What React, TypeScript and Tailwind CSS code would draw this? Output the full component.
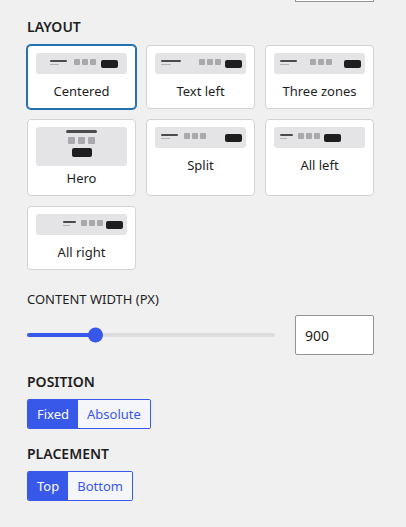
import React from 'react';

type Variant = 'centered' | 'textLeft' | 'threeZones' | 'hero' | 'split' | 'allLeft' | 'allRight';

const layouts: { id: Variant; label: string }[] = [
  { id: 'centered', label: 'Centered' },
  { id: 'textLeft', label: 'Text left' },
  { id: 'threeZones', label: 'Three zones' },
  { id: 'hero', label: 'Hero' },
  { id: 'split', label: 'Split' },
  { id: 'allLeft', label: 'All left' },
  { id: 'allRight', label: 'All right' },
];

const Logo = ({ wide, light }: { wide: string; light: string }) => (
  <div className="mt-[1px] flex flex-col gap-[2px]">
    <div className={`h-[2px] rounded-full bg-[#4a4a4d] ${wide}`} />
    <div className={`h-[1px] bg-[#b3b3b7] ${light}`} />
  </div>
);

const Nav = ({ className = '' }: { className?: string }) => (
  <div className={`flex gap-[2px] ${className}`}>
    <div className="size-[6px] rounded-[1px] bg-[#a9a9ad]" />
    <div className="size-[6px] rounded-[1px] bg-[#a9a9ad]" />
    <div className="size-[6px] rounded-[1px] bg-[#a9a9ad]" />
  </div>
);

const Btn = ({ className = '' }: { className?: string }) => (
  <div className={`mt-[1px] h-[8px] w-[17px] rounded-[2px] bg-[#1e1e1e] ${className}`} />
);

const thumbBase = 'flex h-[21px] items-start rounded-[3px] bg-[#e4e4e7] pt-[6px]';

const Thumb = ({ variant }: { variant: Variant }) => {
  switch (variant) {
    case 'centered':
      return (
        <div className={`${thumbBase} justify-center pl-[4px]`}>
          <Logo wide="w-[17px]" light="w-[9px]" />
          <Nav className="ml-[7px]" />
          <Btn className="ml-[5px]" />
        </div>
      );
    case 'textLeft':
      return (
        <div className={`${thumbBase} justify-between pl-[6px] pr-[4px]`}>
          <Logo wide="w-[20px]" light="w-[10px]" />
          <div className="flex items-start">
            <Nav />
            <Btn className="ml-[4px]" />
          </div>
        </div>
      );
    case 'threeZones':
      return (
        <div className={`${thumbBase} justify-between pl-[6px] pr-[4px]`}>
          <Logo wide="w-[17px]" light="w-[9px]" />
          <Nav />
          <Btn />
        </div>
      );
    case 'hero':
      return (
        <div className="flex h-[39px] flex-col items-center rounded-[3px] bg-[#e4e4e7] pt-[3px]">
          <div className="h-[3px] w-[31px] rounded-full bg-[#4a4a4d]" />
          <div className="mt-[4px] flex gap-[3px]">
            <div className="size-[7px] rounded-[1px] bg-[#a9a9ad]" />
            <div className="size-[7px] rounded-[1px] bg-[#a9a9ad]" />
            <div className="size-[7px] rounded-[1px] bg-[#a9a9ad]" />
          </div>
          <div className="mt-[4px] h-[9px] w-[20px] rounded-[2px] bg-[#1e1e1e]" />
        </div>
      );
    case 'split':
      return (
        <div className={`${thumbBase} justify-between pl-[6px] pr-[4px]`}>
          <div className="flex items-start">
            <Logo wide="w-[17px]" light="w-[9px]" />
            <Nav className="ml-[6px]" />
          </div>
          <Btn />
        </div>
      );
    case 'allLeft':
      return (
        <div className={`${thumbBase} pl-[6px]`}>
          <Logo wide="w-[13px]" light="w-[7px]" />
          <Nav className="ml-[5px]" />
          <Btn className="ml-[4px]" />
        </div>
      );
    case 'allRight':
      return (
        <div className={`${thumbBase} justify-end pr-[4px]`}>
          <Logo wide="w-[13px]" light="w-[7px]" />
          <Nav className="ml-[5px]" />
          <Btn className="ml-[3px]" />
        </div>
      );
  }
};

const Segmented = ({ options, active }: { options: string[]; active: string }) => (
  <div className="mt-[7px] inline-flex h-[30px] overflow-hidden rounded-[2px] border border-[#3858e9]">
    {options.map((opt) => (
      <button
        key={opt}
        className={`px-[9px] text-[13px] leading-none ${
          opt === active ? 'bg-[#3858e9] text-white' : 'bg-[#f5f6fa] text-[#3858e9]'
        }`}
      >
        {opt}
      </button>
    ))}
  </div>
);

export default function App() {
  const selected: Variant = 'centered';

  return (
    <div className="min-h-screen bg-[#f0f0f1] font-['Noto_Sans',sans-serif] text-[#1e1e1e]">
      <div className="ml-[27px] w-[347px]">
        <div className="flex justify-end">
          <div className="h-[2px] w-[79px] border-x border-b border-[#949494] bg-white" />
        </div>

        <h3 className="mt-[15px] text-[14px] font-semibold uppercase leading-[20px]">Layout</h3>

        <div className="mt-[8px] grid grid-cols-3 gap-[10px]">
          {layouts.map((l) => (
            <button
              key={l.id}
              className={`flex flex-col rounded-[4px] border bg-white px-[8px] pb-[8px] pt-[7px] text-left ${
                l.id === selected
                  ? 'border-[#2271b1] shadow-[0_0_0_1px_#2271b1]'
                  : 'border-[#d3d3d6]'
              }`}
            >
              <Thumb variant={l.id} />
              <span
                className={`block text-center text-[13px] leading-[18px] ${
                  l.id === 'hero' ? 'mt-[3px]' : 'mt-[8px]'
                }`}
              >
                {l.label}
              </span>
            </button>
          ))}
        </div>

        <div className="mt-[20px] text-[13px] uppercase leading-[18px]">Content width (px)</div>
        <div className="mt-[7px] flex items-center gap-[20px]">
          <div className="relative flex h-[16px] flex-1 items-center">
            <div className="h-[4px] w-full rounded-full bg-[#dddddd]">
              <div className="h-full w-[69px] rounded-full bg-[#3858e9]" />
            </div>
            <div className="absolute left-[61px] top-1/2 size-[15px] -translate-y-1/2 rounded-full bg-[#3858e9]" />
          </div>
          <input
            readOnly
            value="900"
            className="h-[40px] w-[79px] rounded-[2px] border border-[#949494] bg-white pl-[9px] text-[14px] outline-none"
          />
        </div>

        <h3 className="mt-[17px] text-[14px] font-semibold uppercase leading-[20px]">Position</h3>
        <Segmented options={['Fixed', 'Absolute']} active="Fixed" />

        <h3 className="mt-[15px] text-[14px] font-semibold uppercase leading-[20px]">Placement</h3>
        <div>
          <Segmented options={['Top', 'Bottom']} active="Top" />
        </div>
      </div>
    </div>
  );
}
